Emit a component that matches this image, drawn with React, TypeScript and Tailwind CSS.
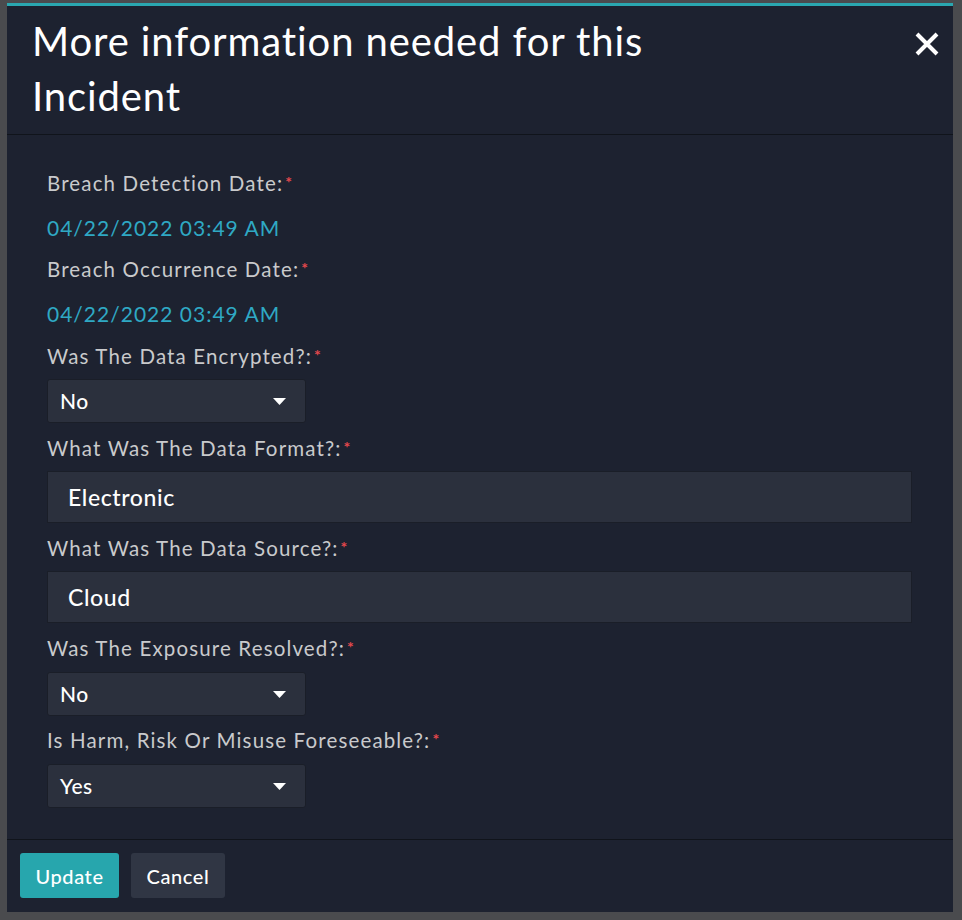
import React from 'react';

const Req = () => <sup className="text-[#e5484d] text-[16px] font-bold ml-[2px] relative -top-[3px]">*</sup>;

const Label = ({ text, className = '' }: { text: string; className?: string }) => (
    <div className={`text-[20.5px] leading-[24px] text-[#c9cacc] tracking-[1.15px] ${className}`}>
        {text}
        <Req />
    </div>
);

const Select = ({ value, className = '' }: { value: string; className?: string }) => (
    <div className={`w-[259px] h-[44px] flex items-center justify-between pl-3 pr-[19px] bg-[#2b303d] border border-[#1a1e28] rounded-[3px] ${className}`}>
        <span className="text-[21px] font-medium text-white tracking-[0.5px]">{value}</span>
        <svg width="13" height="7" viewBox="0 0 13 7">
            <path d="M0 0h13L6.5 7z" fill="#ffffff" />
        </svg>
    </div>
);

const TextInput = ({ value, className = '' }: { value: string; className?: string }) => (
    <div className={`h-[52px] flex items-center pl-5 bg-[#2b303d] border border-[#1a1e28] ${className}`}>
        <span className="text-[23px] font-medium text-white tracking-[0.6px]">{value}</span>
    </div>
);

const App = () => {
    return (
        <div className="min-h-[920px] bg-[#4a4b4e] pt-[3px] pl-[7px]" style={{ fontFamily: 'Lato, "Open Sans", sans-serif' }}>
            <div className="w-[946px] bg-[#1d2230] border-t-[3px] border-[#2aa7b0]">
                {/* header */}
                <div className="flex justify-between pl-[25px] pr-[14px] pt-[8px] pb-[10px] border-b border-[#10141b]">
                    <h1 className="max-w-[680px] text-[40px] leading-[55px] text-white tracking-[0.9px]">
                        More information needed for this Incident
                    </h1>
                    <button className="mt-[18px] w-[24px] h-[24px]">
                        <svg width="24" height="24" viewBox="0 0 24 24">
                            <path d="M2 2 22 22M22 2 2 22" stroke="#ffffff" strokeWidth="4" />
                        </svg>
                    </button>
                </div>

                {/* body */}
                <div className="pl-[40px] pr-[41px] pt-[36px] pb-[31px]">
                    <Label text="Breach Detection Date:" />
                    <div className="mt-[21px] text-[21px] leading-[24px] text-[#2fa9c4] tracking-[1px]">04/22/2022 03:49 AM</div>
                    <Label text="Breach Occurrence Date:" className="mt-[17px]" />
                    <div className="mt-[21px] text-[21px] leading-[24px] text-[#2fa9c4] tracking-[1px]">04/22/2022 03:49 AM</div>

                    <Label text="Was The Data Encrypted?:" className="mt-[18px]" />
                    <Select value="No" className="mt-[11px]" />

                    <Label text="What Was The Data Format?:" className="mt-[13px]" />
                    <TextInput value="Electronic" className="mt-[11px]" />

                    <Label text="What Was The Data Source?:" className="mt-[13px]" />
                    <TextInput value="Cloud" className="mt-[11px]" />

                    <Label text="Was The Exposure Resolved?:" className="mt-[13px]" />
                    <Select value="No" className="mt-[12px]" />

                    <Label text="Is Harm, Risk Or Misuse Foreseeable?:" className="mt-[12px]" />
                    <Select value="Yes" className="mt-[12px]" />
                </div>

                {/* footer */}
                <div className="flex gap-3 pl-[13px] pt-[13px] pb-[14px] border-t border-[#10141b]">
                    <button className="h-[45px] w-[99px] rounded-[3px] bg-[#27a6ad] text-white text-[20px] font-medium tracking-[0.6px]">Update</button>
                    <button className="h-[45px] w-[94px] rounded-[3px] bg-[#303644] text-white text-[20px] font-medium tracking-[0.6px]">Cancel</button>
                </div>
            </div>
        </div>
    );
};

export default App;
